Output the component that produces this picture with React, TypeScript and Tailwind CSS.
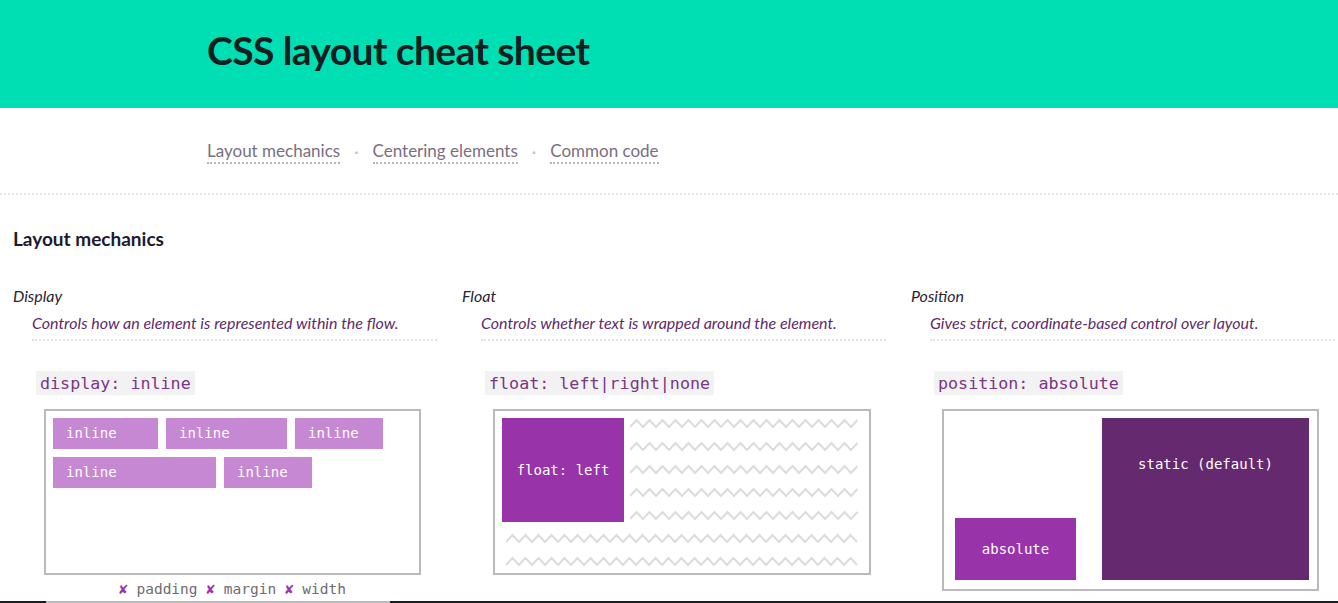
import React from 'react';

const sans = { fontFamily: 'Lato, "Open Sans", sans-serif' };
const mono = { fontFamily: '"DejaVu Sans Mono", "Liberation Mono", monospace' };

// zigzag "text" line used in the float demo
function Zigzag({ width }: { width: number }) {
  const pts: string[] = [];
  for (let x = 0, i = 0; x <= width; x += 6.5, i++) {
    pts.push(`${x},${i % 2 === 0 ? 11 : 4}`);
  }
  return (
    <svg width={width} height={23} className="block">
      <polyline points={pts.join(' ')} fill="none" stroke="#dcdcdf" strokeWidth="2" />
    </svg>
  );
}

function Column({
  title,
  desc,
  code,
  children,
}: {
  title: string;
  desc: string;
  code: string;
  children: React.ReactNode;
}) {
  return (
    <div className="w-[424px] shrink-0">
      <div className="italic text-[16px] text-[#2a2433] leading-[22px]" style={sans}>
        {title}
      </div>
      <div
        className="ml-[19px] mt-[6px] pb-[6px] italic text-[16px] text-[#5e2b6c] leading-[20px] border-b-2 border-dotted border-[#e2e2e6]"
        style={sans}
      >
        {desc}
      </div>
      <div className="mt-[30px] ml-[23px]">
        <span className="inline-block bg-[#f2f2f3] px-[4px] py-[2px] text-[16.7px] text-[#7a3585] leading-[20px]" style={mono}>
          {code}
        </span>
      </div>
      <div className="mt-[14px] ml-[31px]">{children}</div>
    </div>
  );
}

function InlineItem({ w }: { w: number }) {
  return (
    <div
      className="h-[31px] bg-[#c688d2] text-white text-[14px] pl-[13px] flex items-center"
      style={{ ...mono, width: w }}
    >
      inline
    </div>
  );
}

export default function App() {
  return (
    <div className="w-[1338px] h-[603px] overflow-hidden bg-white flex flex-col" style={sans}>
      {/* Header */}
      <header className="h-[108px] bg-[#00dfb4] flex items-center pl-[207px] shrink-0">
        <h1 className="text-[39px] font-bold text-[#13201f] tracking-[-0.6px] -mt-[8px]" style={sans}>
          CSS layout cheat sheet
        </h1>
      </header>

      {/* Nav */}
      <nav className="h-[87px] shrink-0 flex items-center pl-[207px] gap-[14px] text-[17px] text-[#7a6e83] border-b-2 border-dotted border-[#e4e4e6] pt-[3px]">
        <a className="border-b-2 border-dotted border-[#b8b4bc] leading-[22px]">Layout mechanics</a>
        <span className="text-[#c0bcc4]">·</span>
        <a className="border-b-2 border-dotted border-[#b8b4bc] leading-[22px]">Centering elements</a>
        <span className="text-[#c0bcc4]">·</span>
        <a className="border-b-2 border-dotted border-[#b8b4bc] leading-[22px]">Common code</a>
      </nav>

      <main className="px-[13px] pt-[31px] flex-1">
        <h2 className="text-[19px] font-bold text-[#1d1a2e] leading-[26px]">Layout mechanics</h2>

        <div className="mt-[33px] flex gap-[25px]">
          {/* Display */}
          <Column title="Display" desc="Controls how an element is represented within the flow." code="display: inline">
            <div className="w-[377px] h-[166px] border-2 border-[#b9b9be] px-[7px] py-[7px]">
              <div className="flex flex-wrap gap-x-[8px] gap-y-[8px] w-[340px]">
                <InlineItem w={105} />
                <InlineItem w={121} />
                <InlineItem w={88} />
                <InlineItem w={163} />
                <InlineItem w={88} />
              </div>
            </div>
            <div className="w-[377px] text-center text-[14.5px] text-[#6f6a74] mt-[4px]" style={mono}>
              <span className="text-[#9b34ab]">✘</span> padding <span className="text-[#9b34ab]">✘</span> margin{' '}
              <span className="text-[#9b34ab]">✘</span> width
            </div>
          </Column>

          {/* Float */}
          <Column title="Float" desc="Controls whether text is wrapped around the element." code="float: left|right|none">
            <div className="w-[378px] h-[166px] border-2 border-[#b9b9be] pl-[7px] pr-[6px] pt-[7px]">
              <div className="flex gap-[6px]">
                <div
                  className="w-[122px] h-[104px] bg-[#9933aa] text-white text-[14px] flex items-center justify-center"
                  style={mono}
                >
                  float: left
                </div>
                <div className="-mt-[2px]">
                  <Zigzag width={232} />
                  <Zigzag width={232} />
                  <Zigzag width={232} />
                  <Zigzag width={232} />
                  <Zigzag width={232} />
                </div>
              </div>
              <div className="pl-[4px]">
                <Zigzag width={356} />
                <Zigzag width={356} />
              </div>
            </div>
          </Column>

          {/* Position */}
          <Column title="Position" desc="Gives strict, coordinate-based control over layout." code="position: absolute">
            <div className="relative w-[377px] h-[182px] border-2 border-[#b9b9be] pt-[7px] pr-[8px] flex justify-end">
              <div
                className="w-[207px] h-[162px] bg-[#65296f] text-white text-[14px] text-center pt-[36px]"
                style={mono}
              >
                static (default)
              </div>
              <div
                className="absolute left-[11px] bottom-[9px] w-[121px] h-[62px] bg-[#9933aa] text-white text-[14px] flex items-center justify-center"
                style={mono}
              >
                absolute
              </div>
            </div>
          </Column>
        </div>
      </main>

      <div className="h-[2px] bg-[#13201f] shrink-0 relative">
        <div className="absolute left-[46px] w-[344px] h-[2px] bg-[#b9b9be]" />
      </div>
    </div>
  );
}
